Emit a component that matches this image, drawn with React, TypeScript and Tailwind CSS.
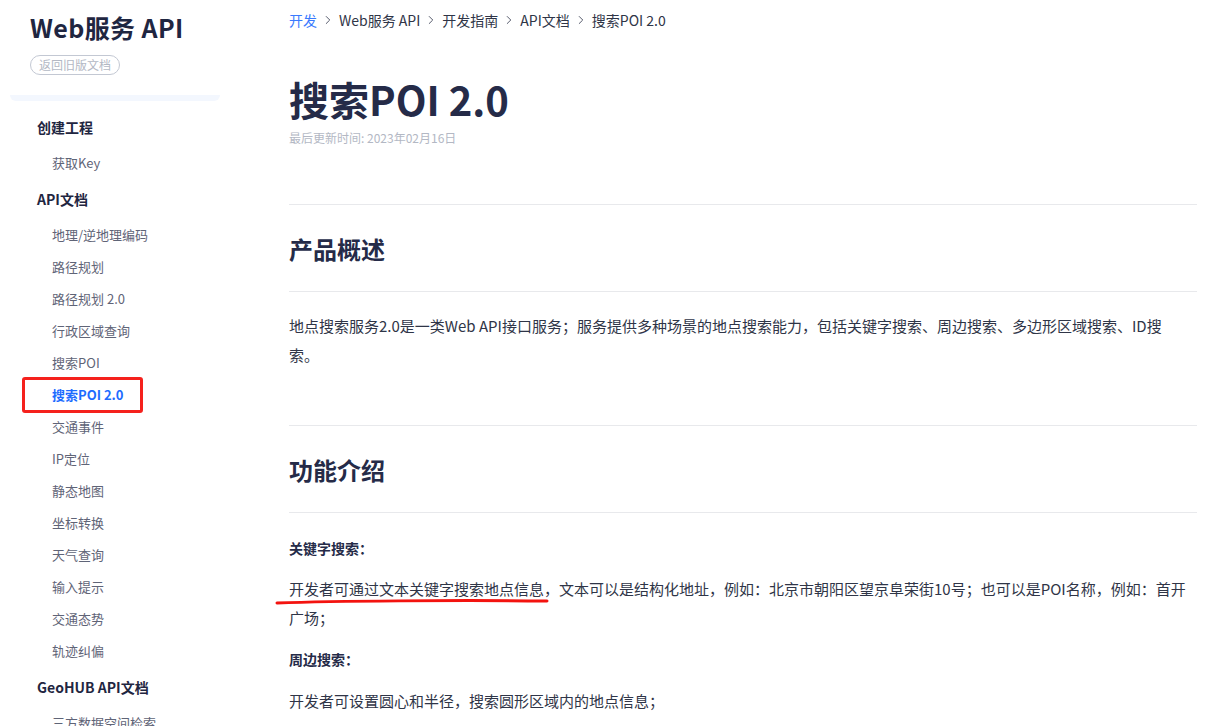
import { ChevronRight } from 'lucide-react';

type NavItem = { label: string; header?: boolean; active?: boolean };

const nav: NavItem[] = [
  { label: '创建工程', header: true },
  { label: '获取Key' },
  { label: 'API文档', header: true },
  { label: '地理/逆地理编码' },
  { label: '路径规划' },
  { label: '路径规划 2.0' },
  { label: '行政区域查询' },
  { label: '搜索POI' },
  { label: '搜索POI 2.0', active: true },
  { label: '交通事件' },
  { label: 'IP定位' },
  { label: '静态地图' },
  { label: '坐标转换' },
  { label: '天气查询' },
  { label: '输入提示' },
  { label: '交通态势' },
  { label: '轨迹纠偏' },
  { label: 'GeoHUB API文档', header: true },
  { label: '三方数据空间检索' },
];

const crumbs = ['开发', 'Web服务 API', '开发指南', 'API文档', '搜索POI 2.0'];

function Sidebar() {
  return (
    <aside className="w-[230px] shrink-0">
      <div className="pl-[30px] pt-[11px]">
        <div className="text-[25px] font-bold leading-[32px] tracking-[0.4px] text-[#1f2641]">Web服务 API</div>
        <div className="mt-[12px] inline-flex h-[20px] items-center rounded-full border border-[#c3c8d3] px-[8px] text-[12px] text-[#b3b8c4]">
          返回旧版文档
        </div>
      </div>
      <div className="mx-[10px] mt-[20px] h-[6px] rounded-b-[10px] bg-[#f3f7fe]" />
      <nav className="mt-[6px]">
        {nav.map((n) =>
          n.header ? (
            <div key={n.label} className="flex h-[40px] items-center pl-[37px] text-[14px] font-bold text-[#1f2641]">
              {n.label}
            </div>
          ) : (
            <div
              key={n.label}
              className={`relative flex h-[32px] items-center pl-[52px] text-[13px] ${
                n.active ? 'font-bold text-[#1d6cff]' : 'text-[#5f6477]'
              }`}
            >
              {n.label}
              {n.active && (
                <span className="absolute left-[22px] top-[-2px] h-[36px] w-[121px] rounded-[3px] border-[3px] border-[#f5211d]" />
              )}
            </div>
          )
        )}
      </nav>
    </aside>
  );
}

function Rule() {
  return <div className="h-px bg-[#e8e9ec]" />;
}

export default function App() {
  return (
    <div
      className="flex h-[726px] overflow-hidden bg-white"
      style={{ fontFamily: '"Noto Sans CJK SC", "Noto Sans", sans-serif' }}
    >
      <Sidebar />
      <main className="min-w-0 flex-1 pl-[59px] pr-[8px]">
        <div className="mt-[10px] flex h-[20px] items-center text-[14px] text-[#2f3547]">
          {crumbs.map((c, i) => (
            <span key={c} className="flex items-center">
              {i > 0 && <ChevronRight size={14} strokeWidth={1.6} className="mx-[4px] text-[#4a5062]" />}
              <span className={i === 0 ? 'text-[#3a7afe]' : ''}>{c}</span>
            </span>
          ))}
        </div>

        <h1 className="mt-[41px] text-[40px] font-bold leading-[56px] text-[#252b48]">搜索POI 2.0</h1>
        <div className="mt-[2px] text-[12px] leading-[18px] text-[#b3b8c4]">最后更新时间: 2023年02月16日</div>

        <div className="mt-[57px]">
          <Rule />
        </div>
        <h2 className="mt-[28px] text-[24px] font-bold leading-[32px] text-[#252b48]">产品概述</h2>
        <div className="mt-[26px]">
          <Rule />
        </div>
        <p className="mt-[19px] text-[15px] leading-[29px] text-[#2f3547]">
          地点搜索服务2.0是一类Web API接口服务；服务提供多种场景的地点搜索能力，包括关键字搜索、周边搜索、多边形区域搜索、ID搜
          <br />
          索。
        </p>

        <div className="mt-[56px]">
          <Rule />
        </div>
        <h2 className="mt-[28px] text-[24px] font-bold leading-[32px] text-[#252b48]">功能介绍</h2>
        <div className="mt-[26px]">
          <Rule />
        </div>

        <div className="mt-[24px] text-[14px] font-bold leading-[22px] text-[#252b48]">关键字搜索：</div>
        <p className="relative mt-[15px] text-[15px] leading-[29px] text-[#2f3547]">
          开发者可通过文本关键字搜索地点信息，文本可以是结构化地址，例如：北京市朝阳区望京阜荣街10号；也可以是POI名称，例如：首开广场；
          <svg className="absolute left-[-14px] top-[24px]" width="276" height="8" viewBox="0 0 276 8">
            <path d="M2 5 C 60 3, 180 2, 272 3" fill="none" stroke="#f3130f" strokeWidth="3" strokeLinecap="round" />
          </svg>
        </p>

        <div className="mt-[16px] text-[14px] font-bold leading-[22px] text-[#252b48]">周边搜索：</div>
        <p className="mt-[16px] text-[15px] leading-[29px] text-[#2f3547]">
          开发者可设置圆心和半径，搜索圆形区域内的地点信息；
        </p>
      </main>
    </div>
  );
}
